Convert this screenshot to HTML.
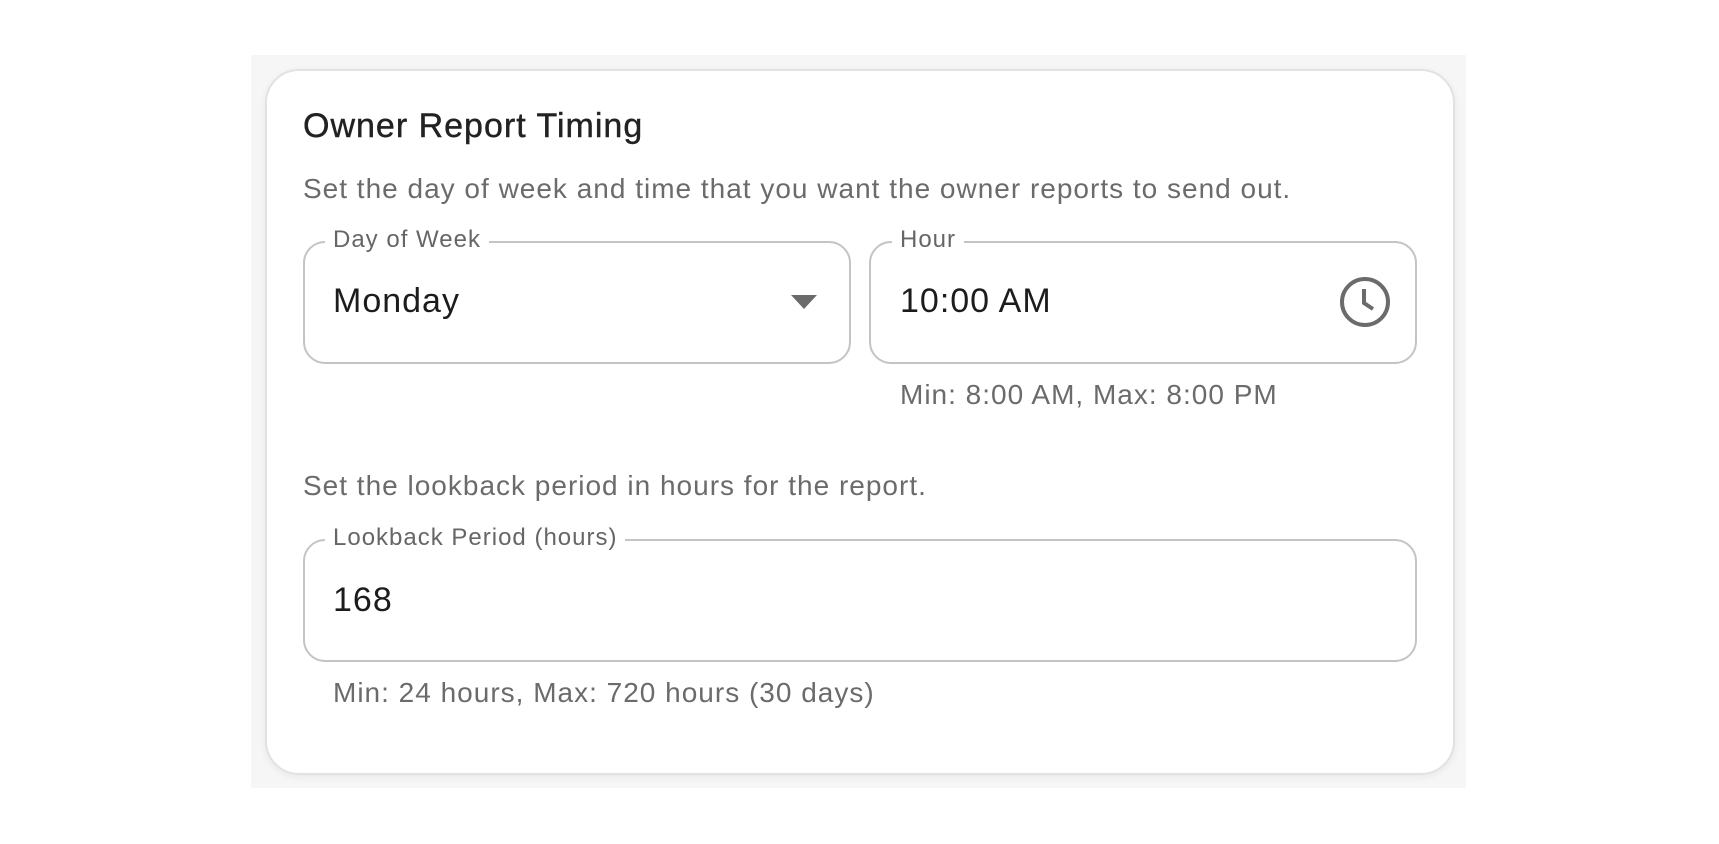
<!DOCTYPE html>
<html><head><meta charset="utf-8"><style>
*{box-sizing:border-box;margin:0;padding:0}
body{width:1719px;height:844px;background:#fff;position:relative;font-family:"Liberation Sans",sans-serif;overflow:hidden}
.band{position:absolute;left:251px;top:55px;width:1215px;height:733px;background:#f6f6f6}
.card{position:absolute;left:265px;top:69px;width:1190px;height:706px;background:#fff;border:2px solid #e2e2e2;border-radius:34px;box-shadow:0 2px 8px rgba(0,0,0,.06)}
.t{position:absolute;white-space:nowrap}
.box{position:absolute;border:2px solid #c4c4c4;border-radius:22px}
.lab{position:absolute;background:#fff;padding:0 8px;color:#666;font-size:24px;line-height:26px;letter-spacing:1px}
.val{font-size:34px;color:#1c1c1c;letter-spacing:1px}
.help{font-size:28px;color:#6b6b6b;letter-spacing:1px}
</style></head><body>
<div class="band"></div>
<div class="card"></div>
<div class="t" style="left:303px;top:107px;font-size:34px;letter-spacing:1px;color:#222;-webkit-text-stroke:0.4px #222">Owner Report Timing</div>
<div class="t help" style="left:303px;top:173px">Set the day of week and time that you want the owner reports to send out.</div>

<div class="box" style="left:303px;top:241px;width:548px;height:123px"></div>
<div class="lab" style="left:325px;top:227px">Day of Week</div>
<div class="t val" style="left:333px;top:282px">Monday</div>
<svg class="t" style="left:790px;top:294px" width="28" height="16"><path d="M1 1H27L14 15Z" fill="#6b6b6b"/></svg>

<div class="box" style="left:869px;top:241px;width:548px;height:123px"></div>
<div class="lab" style="left:892px;top:227px">Hour</div>
<div class="t val" style="left:900px;top:282px">10:00 AM</div>
<svg class="t" style="left:1337px;top:275px" width="56" height="56"><circle cx="28" cy="27" r="23" fill="none" stroke="#6b6b6b" stroke-width="4"/><path d="M27 14V28L36 34" fill="none" stroke="#6b6b6b" stroke-width="4"/></svg>
<div class="t help" style="left:900px;top:379px">Min: 8:00 AM, Max: 8:00 PM</div>

<div class="t help" style="left:303px;top:470px">Set the lookback period in hours for the report.</div>
<div class="box" style="left:303px;top:539px;width:1114px;height:123px"></div>
<div class="lab" style="left:325px;top:525px">Lookback Period (hours)</div>
<div class="t val" style="left:333px;top:581px">168</div>
<div class="t help" style="left:333px;top:677px">Min: 24 hours, Max: 720 hours (30 days)</div>
</body></html>
